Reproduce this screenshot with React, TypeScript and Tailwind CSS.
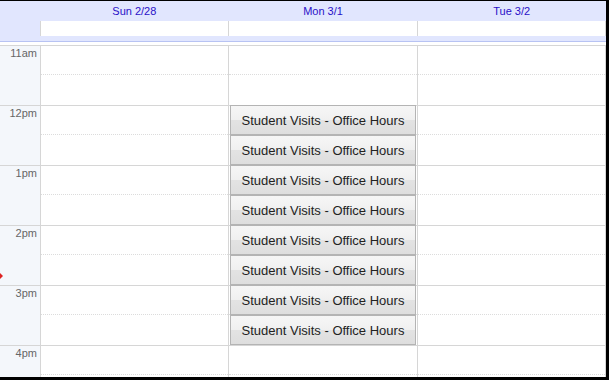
export default function App() {
  const days = ["Sun 2/28", "Mon 3/1", "Tue 3/2"];
  const hours = ["11am", "12pm", "1pm", "2pm", "3pm", "4pm"];
  const events = Array.from({ length: 8 }, (_, i) => i);

  return (
    <div className="w-[609px] h-[380px] bg-white overflow-hidden font-['Liberation_Sans',Arial,sans-serif]">
      <div className="relative w-[609px] h-[380px] border-t border-r-[3px] border-b-[3px] border-black flex flex-col overflow-hidden">
        {/* Header */}
        <div className="bg-[#e1e6fe] shrink-0">
          <div className="flex h-[20px]">
            <div className="w-[40px] shrink-0" />
            {days.map((d) => (
              <div
                key={d}
                className="flex-1 flex items-center justify-center text-[11px] text-[#2a10c8]"
              >
                {d}
              </div>
            ))}
          </div>
          <div className="flex h-[15px]">
            <div className="w-[40px] shrink-0" />
            {days.map((d) => (
              <div key={d} className="flex-1 bg-white border-l border-[#d6d6d6] last:border-r" />
            ))}
          </div>
          <div className="h-[5px]" />
          <div className="h-px bg-[#b8c3f3]" />
          <div className="h-[3px] bg-white" />
        </div>

        {/* Grid */}
        <div className="flex flex-1 min-h-0">
          <div className="w-[41px] shrink-0 bg-[#f4f7fb] border-r border-[#d6d6d6]">
            {hours.map((h) => (
              <div
                key={h}
                className="h-[60px] border-t border-[#d6d6d6] text-right pr-[3px] pt-[2px] text-[11px] leading-none text-[#666]"
              >
                {h}
              </div>
            ))}
          </div>
          {days.map((d, col) => (
            <div key={d} className="relative flex-1 border-r border-[#d6d6d6]">
              {hours.map((h) => (
                <div key={h} className="h-[60px] border-t border-[#d6d6d6]">
                  <div className="h-[29px] border-b border-dotted border-[#dcdcdc]" />
                </div>
              ))}
              {col === 1 && (
                <div className="absolute left-0 right-0 top-[60px] flex flex-col">
                  {events.map((e) => (
                    <div
                      key={e}
                      className="h-[30px] mx-px border border-[#b4b4b4] bg-[linear-gradient(to_bottom,#f6f6f6_0%,#f0f0f0_50%,#e3e3e3_50%,#dedede_100%)] flex items-center justify-center pt-px text-[13px] text-[#222]"
                    >
                      Student Visits - Office Hours
                    </div>
                  ))}
                </div>
              )}
            </div>
          ))}
        </div>

        {/* current time marker */}
        <div className="absolute left-0 top-[272px] w-0 h-0 border-y-[3px] border-y-transparent border-l-[3px] border-l-[#d22]" />
      </div>
    </div>
  );
}
